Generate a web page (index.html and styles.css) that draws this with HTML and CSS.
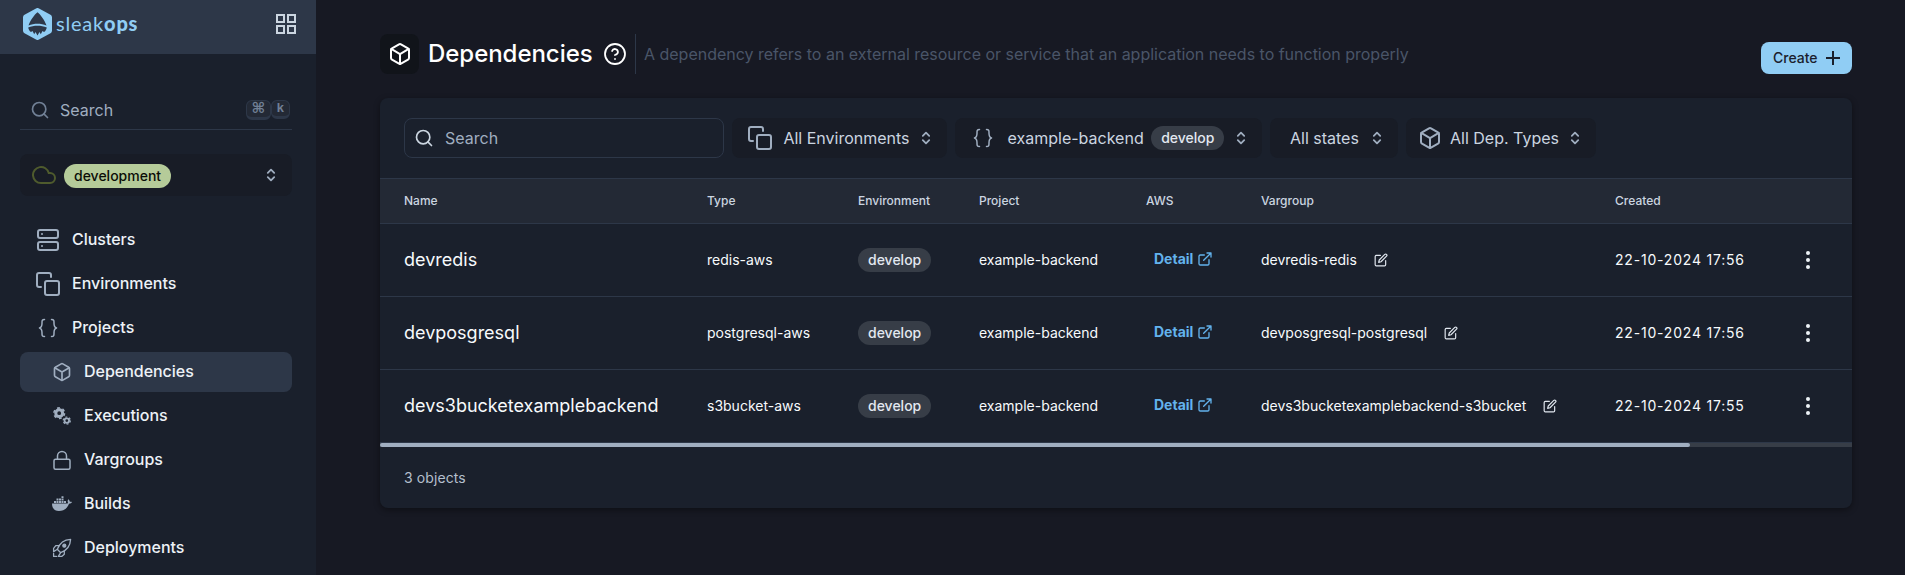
FILE: index.html
```html
<!DOCTYPE html>
<html lang="en">
<head>
<meta charset="utf-8">
<title>Dependencies</title>
<link rel="stylesheet" href="styles.css">
</head>
<body>
<svg class="sprite" width="0" height="0">
  <symbol id="box" viewBox="0 0 24 24"><path d="M21 16V8a2 2 0 0 0-1-1.730l-7-4a2 2 0 0 0-2 0l-7 4A2 2 0 0 0 3 8v8a2 2 0 0 0 1 1.730l7 4a2 2 0 0 0 2 0l7-4A2 2 0 0 0 21 16z"/><path d="M3.270 6.960 12 12.010l8.730-5.050M12 22.080V12"/></symbol>
  <symbol id="search" viewBox="0 0 24 24"><circle cx="11" cy="11" r="8"/><path d="m21 21-4.350-4.350"/></symbol>
  <symbol id="copy" viewBox="0 0 24 24"><rect x="9" y="9" width="14" height="14" rx="2"/><path d="M5 15H3a2 2 0 0 1-2-2V3a2 2 0 0 1 2-2h10a2 2 0 0 1 2 2v2"/></symbol>
  <symbol id="braces" viewBox="0 0 24 24"><path d="M8.500 3.500C5.800 3.500 6 5 6 7.200c0 3-.4 4.200-2.500 4.800C5.600 12.600 6 13.800 6 16.800c0 2.200-.2 3.700 2.500 3.700M15.500 3.500c2.700 0 2.500 1.500 2.500 3.700 0 3 .4 4.200 2.500 4.800-2.100.6-2.500 1.800-2.500 4.800 0 2.200.2 3.700-2.500 3.700"/></symbol>
  <symbol id="updown" viewBox="0 0 16 16"><path d="M4.800 5.800 8 2.700l3.200 3.100M4.800 10.200 8 13.300l3.200-3.100"/></symbol>
  <symbol id="external" viewBox="0 0 24 24"><path d="M18 13v6a2 2 0 0 1-2 2H5a2 2 0 0 1-2-2V8a2 2 0 0 1 2-2h6M15 3h6v6M10 14 21 3"/></symbol>
  <symbol id="edit" viewBox="0 0 24 24"><path d="M11 4H4a2 2 0 0 0-2 2v14a2 2 0 0 0 2 2h14a2 2 0 0 0 2-2v-7"/><path d="M18.500 2.500a2.100 2.100 0 0 1 3 3L12 15l-4 1 1-4z"/></symbol>
  <symbol id="dots" viewBox="0 0 24 24"><circle cx="12" cy="5" r="2"/><circle cx="12" cy="12" r="2"/><circle cx="12" cy="19" r="2"/></symbol>
</svg>
<div class="app">
  <aside class="sidebar">
    <header class="brand">
      <svg class="logo" width="29" height="32" viewBox="0 0 29 32"><path fill="#90cdf4" d="M13 .4a3 3 0 0 1 3 0l11.500 6.400A3 3 0 0 1 29 9.300v13.400a3 3 0 0 1-1.500 2.500L16 31.600a3 3 0 0 1-3 0L1.500 25.200A3 3 0 0 1 0 22.700V9.300a3 3 0 0 1 1.500-2.500z"/><path fill="#2d3748" d="M14.500 4.200c3 2.300 7.500 8.300 9 13.300-5.500-2.300-12.500-2.300-18 0 1.500-5 6-11 9-13.300zM5.200 19.500c5.500-2.300 13-2.300 18.600 0-.3 1.900-1.200 3.500-2.800 4.600l-1.500-1.100-1.700 3.200-1.300-2.200-2 3.600-2-3.600-1.300 2.200-1.700-3.200-1.500 1.100c-1.600-1.100-2.500-2.700-2.800-4.600z"/></svg>
      <span class="wordmark">sleak<b>ops</b></span>
      <svg class="apps" width="20" height="20" viewBox="0 0 20 20"><path d="M1 1h7v7H1zM12 1h7v7h-7zM1 12h7v7H1zM12 12h7v7h-7z"/></svg>
    </header>
    <div class="quick">
      <svg class="ic s20"><use href="#search"/></svg><span>Search</span>
      <kbd class="cmd">⌘</kbd><kbd>k</kbd>
    </div>
    <div class="cluster">
      <svg class="cloud" width="24" height="24" viewBox="0 0 24 24"><path d="M18 10h-1.260A8 8 0 1 0 9 20h9a5 5 0 0 0 0-10z"/></svg>
      <span class="tag green">development</span>
      <svg class="ic s16 caret"><use href="#updown"/></svg>
    </div>
    <nav class="nav">
      <a><svg class="ic s24" viewBox="0 0 24 24"><rect x="2" y="2" width="20" height="8" rx="2"/><rect x="2" y="14" width="20" height="8" rx="2"/><path d="M6 6h.01M6 18h.01"/></svg><span>Clusters</span></a>
      <a><svg class="ic s24"><use href="#copy"/></svg><span>Environments</span></a>
      <a><svg class="ic s24 thin"><use href="#braces"/></svg><span>Projects</span></a>
      <a class="sub active"><svg class="ic s20"><use href="#box"/></svg><span>Dependencies</span></a>
      <a class="sub"><svg class="solid s20" viewBox="0 0 20 20"><g fill="none" stroke="currentColor"><circle cx="7.200" cy="7.200" r="3.400" stroke-width="3"/><circle cx="7.200" cy="7.200" r="5.300" stroke-width="1.600" stroke-dasharray="2.800 2.750"/><circle cx="14.800" cy="14.600" r="2.300" stroke-width="1.800"/><circle cx="14.800" cy="14.600" r="3.600" stroke-width="1.200" stroke-dasharray="1.900 1.870"/></g></svg><span>Executions</span></a>
      <a class="sub"><svg class="ic s20 lock" viewBox="0 0 20 20"><rect x="2" y="9.300" width="16" height="9.900" rx="1.500"/><path d="M5.500 9V6a4.500 4.500 0 0 1 9 0v3"/></svg><span>Vargroups</span></a>
      <a class="sub"><svg class="solid s20" viewBox="0 0 20 20"><path d="M0 9.600h14.200c.8 0 1.500-.2 2-.6-.8-1.200-.7-2.600.1-3.700 1 .7 1.400 1.500 1.500 2.500.8-.2 1.600-.1 2.200.3-.5 1.100-1.500 1.600-3 1.600C15.300 14.400 12 17 6.900 17 2.600 17 0 14.600 0 9.600zM2 7h2v2H2zM4.500 7h2v2h-2zM7 7h2v2H7zM9.500 7h2v2h-2zM12 7h2v2h-2zM4.500 4.600h2v1.900h-2zM7 4.600h2v1.900H7zM9.500 4.600h2v1.900h-2zM9.500 2.200h2v1.900h-2z"/></svg><span>Builds</span></a>
      <a class="sub"><svg class="ic s20 rocket" viewBox="0 0 20 20"><path d="M5.300 11.300C7.500 5.500 12 1.700 18.600 1.400 18.300 8 14.500 12.500 8.700 14.700zM7 7.700H3.800L1.600 10.300v3.400l3.700-2.400M12.300 13v3.200L9.700 18.400H6.300l2.400-3.700M1.600 15.500v2.900h2.900"/><circle cx="12.300" cy="7.700" r="1.500" fill="currentColor"/></svg><span>Deployments</span></a>
    </nav>
  </aside>
  <main class="main">
    <header class="page-head">
      <span class="head-icon"><svg class="ic s24"><use href="#box"/></svg></span>
      <h1>Dependencies</h1>
      <svg class="help" width="24" height="24" viewBox="0 0 24 24"><circle cx="12" cy="12" r="10"/><path d="M9.090 9a3 3 0 0 1 5.830 1c0 2-3 3-3 3M12 17h.01"/></svg>
      <p>A dependency refers to an external resource or service that an application needs to function properly</p>
      <button class="create">Create<svg width="14" height="14" viewBox="0 0 14 14"><path d="M7 0v14M0 7h14"/></svg></button>
    </header>
    <section class="card">
      <div class="filters">
        <div class="input"><svg class="ic s20"><use href="#search"/></svg>Search</div>
        <div class="select env"><svg class="ic s24"><use href="#copy"/></svg><span>All Environments</span><svg class="ic s16"><use href="#updown"/></svg></div>
        <div class="select proj"><svg class="ic s24 thin"><use href="#braces"/></svg><span>example-backend</span><span class="tag">develop</span><svg class="ic s16"><use href="#updown"/></svg></div>
        <div class="select state"><span>All states</span><svg class="ic s16"><use href="#updown"/></svg></div>
        <div class="select types"><svg class="ic s24"><use href="#box"/></svg><span>All Dep. Types</span><svg class="ic s16"><use href="#updown"/></svg></div>
      </div>
      <div class="row thead"><span>Name</span><span>Type</span><span>Environment</span><span>Project</span><span>AWS</span><span>Vargroup</span><span>Created</span></div>
      <div class="row">
        <span class="name">devredis</span><span>redis-aws</span><span><i class="tag">develop</i></span><span>example-backend</span>
        <a class="detail">Detail<svg class="ic s16"><use href="#external"/></svg></a>
        <span class="var">devredis-redis<svg class="ic edit"><use href="#edit"/></svg></span>
        <time>22-10-2024 17:56</time><svg class="dots"><use href="#dots"/></svg>
      </div>
      <div class="row">
        <span class="name">devposgresql</span><span>postgresql-aws</span><span><i class="tag">develop</i></span><span>example-backend</span>
        <a class="detail">Detail<svg class="ic s16"><use href="#external"/></svg></a>
        <span class="var">devposgresql-postgresql<svg class="ic edit"><use href="#edit"/></svg></span>
        <time>22-10-2024 17:56</time><svg class="dots"><use href="#dots"/></svg>
      </div>
      <div class="row">
        <span class="name">devs3bucketexamplebackend</span><span>s3bucket-aws</span><span><i class="tag">develop</i></span><span>example-backend</span>
        <a class="detail">Detail<svg class="ic s16"><use href="#external"/></svg></a>
        <span class="var">devs3bucketexamplebackend-s3bucket<svg class="ic edit"><use href="#edit"/></svg></span>
        <time>22-10-2024 17:55</time><svg class="dots"><use href="#dots"/></svg>
      </div>
      <div class="scroll"><div class="thumb"></div></div>
      <footer>3 objects</footer>
    </section>
  </main>
</div>
</body>
</html>
```
FILE: styles.css
```css
* { box-sizing: border-box; }
body { margin: 0; background: #171923; color: #f7fafc; font: 14px/20px Inter, sans-serif; overflow: hidden; }
.sprite { display: none; }
.app { display: flex; height: 575px; }
.ic { fill: none; stroke: currentColor; stroke-width: 2; stroke-linecap: round; stroke-linejoin: round; flex: none; }
.s24 { width: 24px; height: 24px; }
.s20 { width: 20px; height: 20px; }
.s16 { width: 16px; height: 16px; }
.thin { stroke-width: 1.5; }
.solid { fill: currentColor; flex: none; }

.sidebar { width: 316px; flex: none; background: #1a202c; overflow: hidden; }
.brand { height: 54px; background: #2d3748; display: flex; align-items: center; padding: 0 20px 6px 23px; }
.wordmark { font: 400 20px/24px Lato, sans-serif; color: #90cdf4; margin: -3px 0 0 4px; letter-spacing: .8px; }
.wordmark b { font-weight: 900; letter-spacing: .8px; }
.apps { margin-left: auto; fill: none; stroke: #cbd5e0; stroke-width: 2; }
.quick { margin: 36px 24px 0 20px; height: 40px; border-bottom: 1px solid #2d3748; display: flex; align-items: center; padding: 0 2px 0 10px; color: #a0aec0; font-size: 16px; }
.quick .ic { color: #718096; margin-right: 10px; }
.quick span { margin-right: auto; }
kbd { height: 19px; min-width: 19px; background: #232935; border: 1px solid #2d3748; border-bottom-width: 3px; border-radius: 6px; color: #718096; font: 700 13px/15px "Liberation Mono", monospace; text-align: center; padding: 0 4px; }
kbd.cmd { width: 25px; height: 20px; font: 700 15px/15px "DejaVu Sans", sans-serif; }
.cluster { margin: 24px 24px 24px 20px; height: 42px; border-radius: 8px; background: #181c26; display: flex; align-items: center; padding: 2px 13px 0 12px; }
.cloud { fill: none; stroke: #4f5b2d; stroke-width: 2; }
.cluster .cloud { margin-top: -2px; }
.tag { display: inline-flex; align-items: center; height: 24px; padding: 0 10px; border-radius: 12px; background: #373d47; color: #e2e8f0; font: 500 14px/20px Inter, sans-serif; }
.green { background: #b5cb99; color: #0b0d07; margin-left: 8px; }
.caret { margin: -2px 0 0 auto; }
.select .s16, .caret { color: #a0aec0; stroke-width: 1.8; }
.nav { display: flex; flex-direction: column; gap: 4px; margin: 0 24px 0 20px; }
.nav a { height: 40px; flex: none; display: flex; align-items: center; gap: 12px; padding-left: 16px; border-radius: 8px; font-size: 16px; font-weight: 500; color: #edf2f7; }
.nav span { padding-bottom: 2px; letter-spacing: -.02px; }
.nav svg { color: #a0aec0; }
.nav .sub { padding-left: 32px; }
.nav .active { background: #2d3748; }
.lock { stroke-width: 1.5; }
.rocket { stroke-width: 1.3; }

.main { flex: 1; padding: 34px 53px 0 64px; }
.page-head { height: 40px; display: flex; align-items: center; color: #fff; }
.head-icon { width: 39px; height: 40px; background: #11141a; border-radius: 8px; display: flex; align-items: center; justify-content: center; }
h1 { margin: 0 0 0 9px; width: 175px; font-size: 24px; line-height: 32px; font-weight: 500; letter-spacing: -.04px; }
.help { fill: none; stroke: #fff; stroke-width: 1.8; stroke-linecap: round; stroke-linejoin: round; }
.page-head p { margin: 0 auto 0 8px; height: 40px; border-left: 1px solid #2d3748; padding-left: 8px; font-size: 16px; line-height: 40px; color: #4a5568; letter-spacing: -.01px; }
.create { align-self: flex-start; margin-top: 8px; width: 91px; height: 32px; flex: none; border: 0; border-radius: 8px; background: #90cdf4; color: #1a202c; font: 500 14px/20px Inter, sans-serif; display: flex; align-items: center; gap: 8px; padding: 0 12px; }
.create svg { stroke: #1a202c; stroke-width: 2; }
.card { margin-top: 24px; height: 410px; background: #1a202c; border-radius: 8px; box-shadow: 0 2px 6px rgba(0, 0, 0, .4); overflow: hidden; }
.filters { display: flex; gap: 8px; padding: 20px 24px; height: 80px; }
.input { width: 320px; border: 1px solid #2d3748; border-radius: 8px; display: flex; align-items: center; gap: 11px; padding-left: 9px; font-size: 16px; color: #a0aec0; }
.input .ic { color: #cbd5e0; stroke-width: 2; }
.select { height: 40px; border-radius: 8px; background: #181c26; display: flex; align-items: center; justify-content: space-between; padding: 0 13px 0 16px; font-size: 16px; color: #cbd5e0; }
.select .s24 { color: #a0aec0; }
.env { width: 215px; }
.env span { margin-left: 3px; }
.proj { width: 307px; }
.proj .tag { margin: 0 -4px 0 -5px; }
.state { width: 128px; padding-left: 20px; }
.types { width: 190px; padding-left: 12px; }
.row { display: grid; grid-template-columns: 303px 151px 121px 167px 115px 354px 181px 24px; align-items: center; height: 73px; padding-left: 24px; border-bottom: 1px solid #2d3748; white-space: nowrap; }
.row.thead { height: 46px; background: #232935; border-top: 1px solid #2d3748; font-size: 12px; font-weight: 500; color: #cbd5e0; }
.name { font-size: 18px; }
.detail { display: flex; align-items: center; gap: 4px; padding: 0 0 3px 8px; font-weight: 700; color: #63b3ed; }
.var { display: flex; align-items: center; gap: 17px; }
.edit { width: 14px; height: 14px; color: #e2e8f0; }
time { letter-spacing: .8px; }
.dots { width: 24px; height: 24px; fill: #edf2f7; }
.scroll { height: 4px; background: #373d47; }
.thumb { width: 1310px; height: 4px; border-radius: 2px; background: #a0aec0; }
footer { padding: 21px 24px; color: #b4bfcd; letter-spacing: .1px; }
```
